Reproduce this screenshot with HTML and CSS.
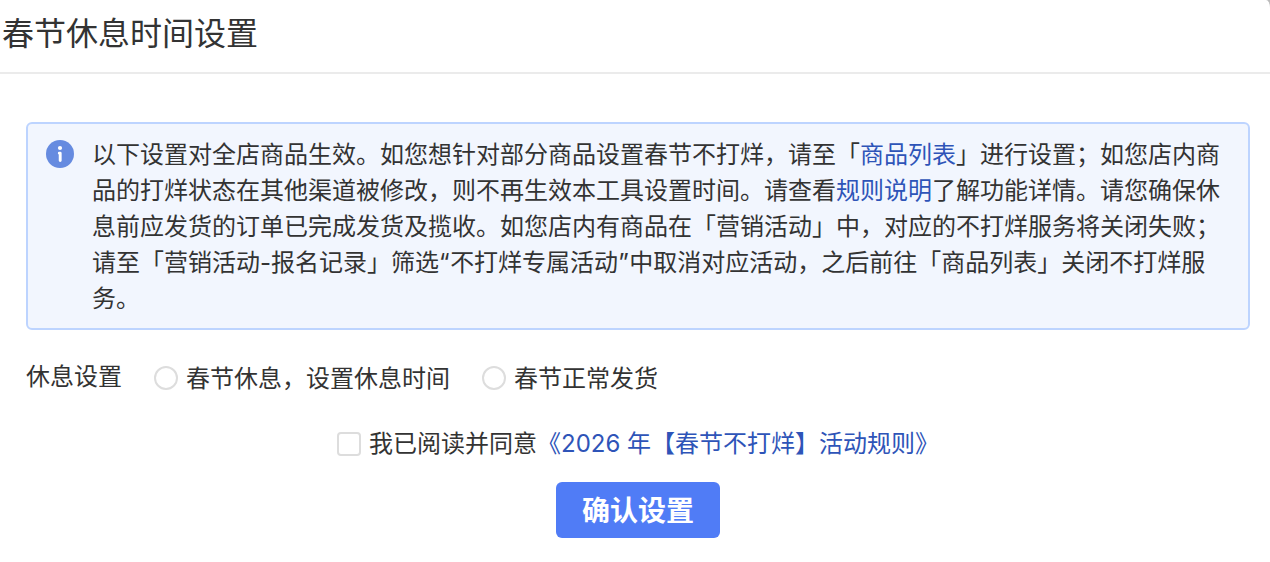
FILE: index.html
```
<!DOCTYPE html>
<html lang="zh-CN">
<head>
  <meta charset="UTF-8">
  <title>春节休息时间设置</title>
  <meta name="viewport" content="width=device-width, initial-scale=1.0">
  <link rel="stylesheet" href="styles.css">
</head>
<body>
  <div class="modal">
    <div class="modal-header">春节休息时间设置</div>
    <form class="modal-body" onsubmit="return false;">
      <div class="notice">
        <svg class="notice-icon" viewBox="0 0 28 28">
          <circle cx="14" cy="14" r="14" fill="#668be0"/>
          <circle cx="14" cy="8" r="2.1" fill="#fff"/>
          <path d="M13.3 13.2H14.2V20.6" fill="none" stroke="#fff" stroke-width="2.9" stroke-linecap="round" stroke-linejoin="round"/>
        </svg>
        <div class="notice-text">以下设置对全店商品生效。如您想针对部分商品设置春节不打烊，请至「<a class="link">商品列表</a>」进行设置；如您店内商品的打烊状态在其他渠道被修改，则不再生效本工具设置时间。请查看<a class="link">规则说明</a>了解功能详情。请您确保休息前应发货的订单已完成发货及揽收。如您店内有商品在「营销活动」中，对应的不打烊服务将关闭失败；请至「营销活动-报名记录」筛选<span class="quote">“</span>不打烊专属活动<span class="quote">”</span>中取消对应活动，之后前往「商品列表」关闭不打烊服务。</div>
      </div>
      <div class="form-row">
        <span class="form-label">休息设置</span>
        <label class="radio"><input class="radio-input" type="radio" name="rest"><span class="radio-text">春节休息，设置休息时间</span></label>
        <label class="radio"><input class="radio-input" type="radio" name="rest"><span class="radio-text">春节正常发货</span></label>
      </div>
      <label class="agree">
        <input class="agree-input" type="checkbox">
        <span>我已阅读并同意<a class="link">《2026 年【春节不打烊】活动规则》</a></span>
      </label>
      <button class="submit-btn" type="submit">确认设置</button>
    </form>
  </div>
</body>
</html>
```

FILE: styles.css
```
html, body {
  height: 100%;
  margin: 0;
  padding: 0;
}
body {
  background: #bbb;
  font-family: Inter, 'Noto Sans CJK SC', sans-serif;
  font-size: 24px;
  color: #333;
  text-spacing-trim: space-all;
  overflow: hidden;
}
.modal {
  height: 100%;
  background: #fff;
  border-top-right-radius: 4px 8px;
}
.modal-header {
  box-sizing: border-box;
  height: 74px;
  padding: 10px 0 0 2px;
  border-bottom: 2px solid #ebebeb;
  font-size: 32px;
  line-height: 48px;
}
.modal-body {
  display: flex;
  flex-direction: column;
  padding: 48px 20px 0 26px;
}
.notice {
  display: flex;
  gap: 18px;
  box-sizing: border-box;
  height: 208px;
  padding: 13px 24px 11px 18px;
  border: 2px solid #bdd4ff;
  border-radius: 6px;
  background: #f2f6fe;
}
.notice-icon {
  flex: none;
  width: 28px;
  height: 28px;
  margin-top: 3px;
}
.notice-text {
  width: 1132px;
  line-height: 36px;
}
.quote {
  letter-spacing: .5px;
}
.link {
  color: #2e54b8;
  cursor: pointer;
}
.form-row {
  display: flex;
  align-items: center;
  height: 36px;
  margin-top: 30px;
  line-height: 36px;
}
.form-label {
  margin: -2px 32px 0 0;
}
.radio {
  display: flex;
  align-items: center;
  margin-right: 32px;
}
.radio-text {
  padding-top: 2px;
}
.radio-input, .agree-input {
  appearance: none;
  box-sizing: border-box;
  width: 24px;
  height: 24px;
  margin: 0 8px 0 0;
  border: 2px solid #ddd;
  background: #fff;
}
.radio-input {
  border-radius: 50%;
}
.agree {
  display: flex;
  align-items: center;
  align-self: flex-start;
  margin: 30px 0 0 311px;
  line-height: 36px;
}
.agree-input {
  border-radius: 4px;
}
.submit-btn {
  width: 164px;
  height: 56px;
  margin: 20px 0 0 530px;
  padding: 0 0 2px;
  border: none;
  border-radius: 6px;
  background: #507cf6;
  color: #fff;
  font-family: inherit;
  font-size: 28px;
  font-weight: 700;
  cursor: pointer;
}
```
